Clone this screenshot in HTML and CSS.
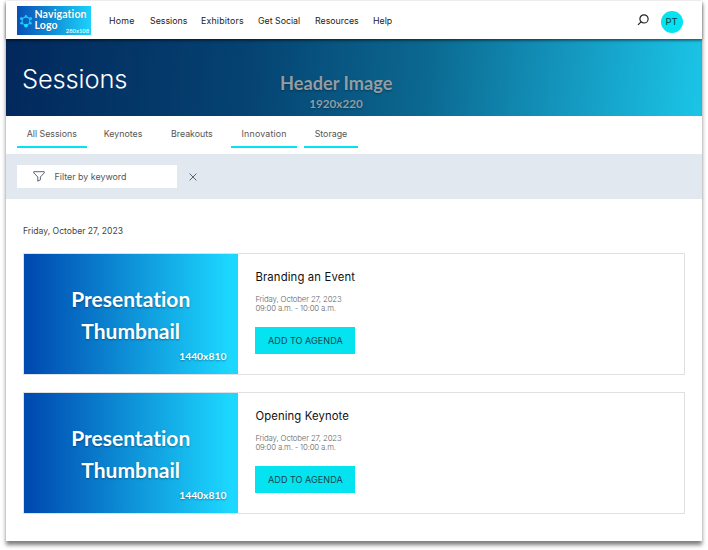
FILE: index.html
```html
<!DOCTYPE html>
<html lang="en">
<head>
<meta charset="utf-8">
<title>Sessions</title>
<link rel="stylesheet" href="styles.css">
</head>
<body>
<div class="page">
  <header class="topbar">
    <div class="logo">
      <svg class="logo-mark" viewBox="0 0 14 14" fill="none" stroke="#20c5fb">
        <circle cx="7" cy="7" r="3.9" stroke-width="1.1"/>
        <g fill="#20c5fb" stroke="none"><circle cx="7" cy="2.2" r="1.3"/><circle cx="2.5" cy="4.5" r="1.6"/><circle cx="11.5" cy="4.5" r="1.6"/><circle cx="2.5" cy="9.3" r="1.3"/><circle cx="11.5" cy="9.3" r="1.3"/><circle cx="7" cy="11.6" r="1.9" fill="#18e4ff"/></g>
      </svg>
      <div class="logo-name">Navigation<br>Logo</div>
      <span class="logo-size">280x108</span>
    </div>
    <nav class="nav"><a>Home</a><a>Sessions</a><a>Exhibitors</a><a>Get Social</a><a>Resources</a><a>Help</a></nav>
    <svg class="search" viewBox="0 0 12 12" fill="none" stroke="#222" stroke-width="1.2"><circle cx="7" cy="4.9" r="4.1"/><path d="M4 7.9L1 10.9"/></svg>
    <div class="avatar">PT</div>
  </header>
  <section class="hero">
    <h1>Sessions</h1>
    <div class="hero-label"><div class="hero-title">Header Image</div><div class="hero-size">1920x220</div></div>
  </section>
  <nav class="tabs"><a class="on">All Sessions</a><a>Keynotes</a><a>Breakouts</a><a class="on">Innovation</a><a class="on">Storage</a></nav>
  <div class="filter">
    <div class="field">
      <svg class="funnel" viewBox="0 0 12 11" fill="none" stroke="#465563" stroke-width=".9" stroke-linejoin="round"><path d="M.7.7H11.3V1.8L7.4 6V8.8L4.8 10.2V6L.7 1.8Z"/></svg>
      <span>Filter by keyword</span>
    </div>
    <svg class="clear" viewBox="0 0 8 8" stroke="#465563" stroke-width=".9"><path d="M.6.6L7.4 7.4M7.4.6L.6 7.4"/></svg>
  </div>
  <main class="list">
    <h2 class="day">Friday, October 27, 2023</h2>
    <article class="card">
      <div class="thumb"><div class="thumb-title">Presentation<br>Thumbnail</div><div class="thumb-size">1440x810</div></div>
      <div class="info">
        <h3 class="branding">Branding an Event</h3>
        <p><span class="date">Friday, October 27, 2023</span><br><span class="time">09:00 a.m. - 10:00 a.m.</span></p>
        <button>ADD TO AGENDA</button>
      </div>
    </article>
    <article class="card">
      <div class="thumb"><div class="thumb-title">Presentation<br>Thumbnail</div><div class="thumb-size">1440x810</div></div>
      <div class="info">
        <h3 class="opening">Opening Keynote</h3>
        <p><span class="date">Friday, October 27, 2023</span><br><span class="time">09:00 a.m. - 10:00 a.m.</span></p>
        <button>ADD TO AGENDA</button>
      </div>
    </article>
  </main>
</div>
</body>
</html>
```
FILE: styles.css
```css
* { box-sizing: border-box; margin: 0; padding: 0; }
body { background: #fff; font-family: Inter, "Liberation Sans", sans-serif; overflow: hidden; height: 550px; }
.page { width: 696px; height: 541px; margin-left: 6px; padding-top: 1px; background: #fff; box-shadow: 0 4px 4px rgba(0,0,0,.5); }
.topbar { position: relative; height: 38px; display: flex; align-items: center; padding: 0 19.5px 0 10.5px; box-shadow: 0 1px 3px rgba(0,0,0,.45); }
.logo { position: relative; width: 74.5px; height: 29px; margin-top: 1px; display: flex; align-items: center; padding-left: 2px; background: linear-gradient(90deg, #0750b5, #1cd2fb); }
.logo-mark { width: 14px; height: 14px; margin-right: 2px; }
.logo-name { font: 700 10.6px/11.5px Lato, sans-serif; font-variant-ligatures: none; letter-spacing: .1px; color: #fff; margin-top: -1px; text-shadow: 0 0 1px rgba(0,0,0,.3); }
.logo-size { position: absolute; right: 2px; bottom: 1px; font: 700 5.8px/7px Lato, sans-serif; color: #d5f5ff; }
.nav { display: grid; grid-template-columns: 41px 51px 57px 57px 58px auto; margin-left: 18px; padding-top: 2px; font-size: 8.8px; line-height: 12px; color: #222; white-space: nowrap; }
.nav a:nth-child(3) { letter-spacing: .18px; }
.nav a:nth-child(1) { letter-spacing: .25px; }
.search { width: 12px; height: 12px; margin-left: auto; }
.avatar { width: 22px; height: 22px; margin: 3px 0 0 11.5px; border-radius: 50%; background: #05e2f0; font-size: 9.5px; line-height: 22px; text-align: center; color: #123c44; }
.hero { height: 77px; display: flex; align-items: center; padding-left: 16px; background: linear-gradient(95deg, #02285c 0%, #054372 35%, #0b6890 60%, #1496be 80%, #1bc5e7 100%); box-shadow: inset 0 2px 2px rgba(0,0,0,.18); }
.hero h1 { width: 258px; font-size: 25.5px; font-weight: 300; letter-spacing: -.15px; line-height: 32px; color: #fff; padding-top: 2px; }
.hero-label { width: 112px; padding-top: 29px; text-align: center; font-family: Lato, sans-serif; font-weight: 700; color: #929da4; white-space: nowrap; text-shadow: 0 1px 2px rgba(0,0,0,.35); }
.hero-title { font-size: 18.2px; line-height: 21px; }
.hero-size { font-size: 11.7px; line-height: 18px; }
.tabs { height: 38px; padding-left: 10.5px; display: grid; grid-template-columns: 70.5px 60.5px 64.5px 66.5px 54.5px; column-gap: 6.3px; font-size: 8.8px; color: #555; text-align: center; white-space: nowrap; }
.tabs a { height: 32px; line-height: 36px; }
.tabs a:nth-child(2), .tabs a:nth-child(3) { padding-right: 1px; }
.tabs a:nth-child(4) { letter-spacing: .2px; }
.tabs .on { border-bottom: 2px solid #05e2f0; }
.filter { height: 45px; display: flex; align-items: center; padding-left: 10.5px; background: #e1e8ef; }
.field { width: 160.5px; height: 23px; background: #fff; display: flex; align-items: center; padding-left: 16px; font-size: 8.9px; color: #555; }
.funnel { width: 12px; height: 11px; margin-right: 10px; }
.field span { margin-top: -1px; }
.clear { width: 8px; height: 8px; margin-left: 12px; }
.list { padding: 25px 17px 0; }
.day { font-size: 8.6px; font-weight: 400; line-height: 14px; color: #444; margin-bottom: 15px; }
.card { height: 122px; display: flex; border: 1px solid #dfe0e1; margin-bottom: 17px; }
.thumb { position: relative; width: 214.4px; background: linear-gradient(90deg, #004bb0 3%, #1cd7ff 96%); color: #fff; font-family: Lato, sans-serif; font-weight: 700; font-variant-ligatures: none; text-shadow: 0 1px 2px rgba(0,0,0,.35); }
.thumb-title { padding-top: 29px; padding-right: 1px; text-align: center; font-size: 21px; line-height: 31.5px; }
.thumb-size { position: absolute; right: 12px; bottom: 11px; font-size: 10.3px; line-height: 14px; }
.info { padding: 15px 0 0 17px; white-space: nowrap; }
.info h3 { font-size: 11.3px; font-weight: 400; line-height: 16px; color: #111; }
.branding { letter-spacing: .15px; }
.opening { letter-spacing: .12px; }
.info p { font-size: 7.8px; font-weight: 300; line-height: 9.3px; color: #666; margin-top: 10px; }
.date { letter-spacing: -.13px; }
.time { letter-spacing: -.17px; }
.info button { display: block; width: 100px; height: 27px; margin-top: 13.5px; border: 0; background: #05e2f0; font: 400 9.1px Inter, sans-serif; color: #16454c; }
```
